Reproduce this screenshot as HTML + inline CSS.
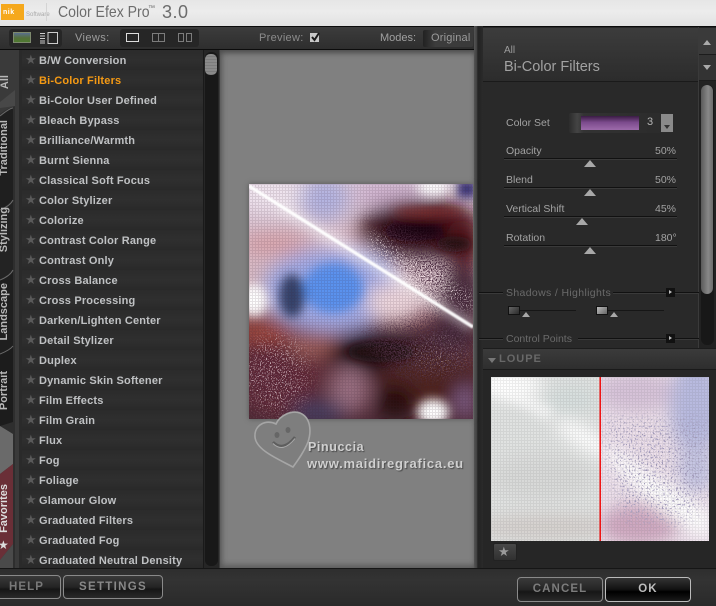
<!DOCTYPE html>
<html><head><meta charset="utf-8"><style>
*{box-sizing:border-box}
html,body{margin:0;padding:0;background:#2b2b2b}
#p{position:relative;width:716px;height:606px;overflow:hidden;background:#2b2b2b;font-family:"Liberation Sans",sans-serif}
.a{position:absolute}
.t{position:absolute;white-space:nowrap}
.row{position:absolute;left:22px;width:181px;height:20px;background:linear-gradient(#2b2b2b,#2f2f2f 50%,#292929)}
.row span{position:absolute;left:17px;top:4px;font-size:11px;font-weight:bold;color:#bfc1c3;letter-spacing:.18px;white-space:nowrap;line-height:14px}
.row i{position:absolute;left:3px;top:3px;font-style:normal;font-size:13px;line-height:14px;color:#5a5a5a}
.vt{position:absolute;left:-2px;font-size:11px;font-weight:bold;color:#b8b8b8;writing-mode:vertical-rl;transform:rotate(180deg);white-space:nowrap;line-height:12px}
.lab{position:absolute;font-size:10.5px;color:#a2a2a2;white-space:nowrap;line-height:12px}
.line{position:absolute;height:1px;background:#111;box-shadow:0 1px 0 #3a3a3a}
.thumb{position:absolute;width:0;height:0;border-left:6px solid transparent;border-right:6px solid transparent;border-bottom:7px solid #a8a8a8}
.btn{position:absolute;border:1px solid #8a8a8a;border-radius:4px;text-align:center;font-size:11.5px;font-weight:bold;letter-spacing:1.1px;background:linear-gradient(#3a3a3a,#242424 50%,#161616 60%,#2a2a2a)}
</style></head><body><div id="p">
<div class="a" style="left:0;top:0;width:716px;height:26px;background:linear-gradient(#e6e6e6,#ececec 45%,#e2e2e2)"></div>
<div class="a" style="left:1px;top:4px;width:23px;height:16px;background:#f5a81c"></div>
<div class="t" style="left:3px;top:9px;font-size:7px;font-weight:bold;color:#fff;letter-spacing:.5px">nik</div>
<div class="t" style="left:26px;top:12px;font-size:6px;color:#aaa">Software</div>
<div class="a" style="left:46px;top:3px;width:1px;height:18px;background:#d4d4d4"></div>
<div class="t" style="left:58px;top:3px;font-size:16px;color:#6c6c6c;line-height:19px;transform:scaleX(.88);transform-origin:0 0">Color Efex Pro</div>
<div class="t" style="left:148px;top:4px;font-size:7px;color:#6c6c6c;line-height:9px">™</div>
<div class="t" style="left:162px;top:2px;font-size:18px;color:#6c6c6c;line-height:21px;letter-spacing:.5px">3.0</div>

<div class="a" style="left:0;top:26px;width:716px;height:24px;background:linear-gradient(#3c3c3c,#2e2e2e);border-top:1px solid #0c0c0c;border-bottom:1px solid #0c0c0c"></div>
<div class="a" style="left:9px;top:29px;width:53px;height:18px;background:#262626;border-radius:3px"></div>
<div class="a" style="left:13px;top:32px;width:18px;height:11px;background:linear-gradient(#5a6f8e 0,#55703a 55%,#4e7a30);border:1px solid #7d8a6e"></div>
<svg class="a" style="left:39px;top:32px" width="20" height="12"><path d="M1 1.5h5M1 4h5M1 6.5h5M1 9h5M1 11h5" stroke="#ccc" stroke-width="1"/><rect x="9" y=".5" width="9.5" height="11" fill="none" stroke="#ccc"/></svg>
<div class="t" style="left:75px;top:31px;font-size:11px;color:#9c9c9c;letter-spacing:.4px;line-height:14px">Views:</div>
<div class="a" style="left:120px;top:29px;width:79px;height:18px;background:#262626;border-radius:3px"></div>
<div class="a" style="left:126px;top:33px;width:13px;height:9px;border:1px solid #ddd"></div>
<svg class="a" style="left:150px;top:32px" width="46" height="11"><path d="M2.5 1.5h12v8h-12zM8.5 1.5v8M28.5 1.5h5v8h-5zM36.5 1.5h5v8h-5z" fill="none" stroke="#7c7c7c"/></svg>
<div class="t" style="left:259px;top:31px;font-size:11px;color:#8c8c8c;letter-spacing:.3px;line-height:14px">Preview:</div>
<div class="a" style="left:310px;top:33px;width:9px;height:9px;background:#c8c8c8"></div>
<svg class="a" style="left:309px;top:31px" width="12" height="12"><path d="M3 6l2.5 3L10 2" stroke="#1a1a1a" stroke-width="2" fill="none"/></svg>
<div class="t" style="left:380px;top:31px;font-size:11px;color:#a0a0a0;line-height:14px">Modes:</div>
<div class="a" style="left:423px;top:30px;width:50px;height:17px;background:linear-gradient(90deg,#222,#3c3c3c 25%,#3a3a3a);border-radius:2px;overflow:hidden"><span class="t" style="left:8px;top:1px;font-size:11px;color:#9a9a9a;line-height:14px;letter-spacing:.2px">Original Image</span></div>

<!-- left tabs -->
<div class="a" style="left:0;top:50px;width:22px;height:518px;background:#2e2e2e"></div>
<svg class="a" style="left:0;top:50px" width="20" height="518">
<path d="M0 0H15V56Q8 58 0 64Z" fill="#3a3a3a"/>
<path d="M0 52L15 40V56L0 58Z" fill="#484848"/>
<path d="M0 66Q10 58 13 58V152L0 160Z" fill="#1f1f1f"/>
<path d="M0 160Q10 152 13 150V222L0 230Z" fill="#232323"/>
<path d="M0 230Q10 226 13 220V298L0 304Z" fill="#1f1f1f"/>
<path d="M0 304Q10 300 13 296V372L0 376Z" fill="#1c1c1c"/>
<path d="M0 376L13 384V414L0 424Z" fill="#6a6a6a"/>
<path d="M0 424L13 414V494L0 510Z" fill="#6a2f37"/>
<path d="M0 510L13 494V518H0Z" fill="#4a4a4a"/>
<path d="M0 66Q10 58 13 58M0 160Q10 156 13 150M0 230Q10 226 13 220M0 304Q10 300 13 296" fill="none" stroke="#6a6a6a"/>
</svg>
<div class="vt" style="top:75px;left:-1px">All</div>
<div class="vt" style="top:120px">Traditional</div>
<div class="vt" style="top:207px">Stylizing</div>
<div class="vt" style="top:283px">Landscape</div>
<div class="vt" style="top:371px">Portrait</div>
<div class="vt" style="top:484px;color:#ddd">Favorites</div>
<div class="t" style="left:-2px;top:538px;font-size:12px;color:#ddd;line-height:14px">★</div>
<div class="a" style="left:15px;top:50px;width:4px;height:518px;background:#3a3a3a"></div>

<!-- list -->
<div class="a" style="left:19px;top:50px;width:184px;height:518px;background:#2a2a2a"></div>
<div class="row" style="top:50px"><i>★</i><span>B/W Conversion</span></div>
<div class="row" style="top:70px"><i>★</i><span style="color:#f59a14">Bi-Color Filters</span></div>
<div class="row" style="top:90px"><i>★</i><span>Bi-Color User Defined</span></div>
<div class="row" style="top:110px"><i>★</i><span>Bleach Bypass</span></div>
<div class="row" style="top:130px"><i>★</i><span>Brilliance/Warmth</span></div>
<div class="row" style="top:150px"><i>★</i><span>Burnt Sienna</span></div>
<div class="row" style="top:170px"><i>★</i><span>Classical Soft Focus</span></div>
<div class="row" style="top:190px"><i>★</i><span>Color Stylizer</span></div>
<div class="row" style="top:210px"><i>★</i><span>Colorize</span></div>
<div class="row" style="top:230px"><i>★</i><span>Contrast Color Range</span></div>
<div class="row" style="top:250px"><i>★</i><span>Contrast Only</span></div>
<div class="row" style="top:270px"><i>★</i><span>Cross Balance</span></div>
<div class="row" style="top:290px"><i>★</i><span>Cross Processing</span></div>
<div class="row" style="top:310px"><i>★</i><span>Darken/Lighten Center</span></div>
<div class="row" style="top:330px"><i>★</i><span>Detail Stylizer</span></div>
<div class="row" style="top:350px"><i>★</i><span>Duplex</span></div>
<div class="row" style="top:370px"><i>★</i><span>Dynamic Skin Softener</span></div>
<div class="row" style="top:390px"><i>★</i><span>Film Effects</span></div>
<div class="row" style="top:410px"><i>★</i><span>Film Grain</span></div>
<div class="row" style="top:430px"><i>★</i><span>Flux</span></div>
<div class="row" style="top:450px"><i>★</i><span>Fog</span></div>
<div class="row" style="top:470px"><i>★</i><span>Foliage</span></div>
<div class="row" style="top:490px"><i>★</i><span>Glamour Glow</span></div>
<div class="row" style="top:510px"><i>★</i><span>Graduated Filters</span></div>
<div class="row" style="top:530px"><i>★</i><span>Graduated Fog</span></div>
<div class="row" style="top:550px;height:18px"><i>★</i><span>Graduated Neutral Density</span></div>

<!-- list scrollbar -->
<div class="a" style="left:203px;top:50px;width:17px;height:518px;background:#262626;border-left:1px solid #1a1a1a;border-right:1px solid #3c3c3c"></div>
<div class="a" style="left:205px;top:52px;width:13px;height:514px;background:#181818;border-radius:6px"></div>
<div class="a" style="left:205px;top:54px;width:12px;height:21px;border-radius:5px;background:repeating-linear-gradient(#8a8a8a 0,#8a8a8a 2px,#6e6e6e 3px)"></div>

<!-- preview -->
<div class="a" style="left:220px;top:50px;width:254px;height:518px;background:#808080;box-shadow:inset 0 5px 6px -2px #4c4c4c,inset 5px 0 6px -3px #5c5c5c,inset 0 -6px 6px -3px #5c5c5c"></div>
<div class="a" style="left:474px;top:26px;width:9px;height:542px;background:linear-gradient(90deg,#555,#3e3e3e 35%,#222 40%,#2a2a2a)"></div>

<svg class="a" style="left:249px;top:184px;box-shadow:0 0 5px #555" width="224" height="235" viewBox="0 0 224 235">
<defs>
<filter id="b" x="-40%" y="-40%" width="180%" height="180%"><feGaussianBlur stdDeviation="9"/></filter>
<filter id="b2" x="-40%" y="-40%" width="180%" height="180%"><feGaussianBlur stdDeviation="5"/></filter>
<filter id="b3"><feGaussianBlur stdDeviation=".8"/></filter>
<filter id="nk" x="0" y="0" width="100%" height="100%"><feTurbulence type="fractalNoise" baseFrequency=".8" numOctaves="2" seed="4"/><feColorMatrix values="0 0 0 0 .08 0 0 0 0 .03 0 0 0 0 .06 9 0 0 0 -4.2"/></filter>
<filter id="nw" x="0" y="0" width="100%" height="100%"><feTurbulence type="fractalNoise" baseFrequency=".8" numOctaves="2" seed="9"/><feColorMatrix values="0 0 0 0 1 0 0 0 0 .86 0 0 0 0 .9 9 0 0 0 -5.2"/></filter>
<pattern id="g" width="3" height="3" patternUnits="userSpaceOnUse"><path d="M0 .5H3M.5 0V3" stroke="#3a2030" stroke-opacity=".12" stroke-width="1"/></pattern>
<linearGradient id="wm" x1="0" y1="0" x2="0" y2="1"><stop offset="0" stop-color="#dccbdc"/><stop offset=".5" stop-color="#d6b4bc"/><stop offset=".62" stop-color="#703a40"/><stop offset="1" stop-color="#4e2a36"/></linearGradient>
<mask id="mk"><rect width="224" height="235" fill="#000"/><path d="M110 30L224 75V190L150 195L110 150L190 130Z" fill="#fff" filter="url(#b)"/><ellipse cx="20" cy="200" rx="30" ry="25" fill="#555" filter="url(#b)"/></mask>
<mask id="mw"><rect width="224" height="235" fill="#000"/><path d="M120 45L224 110V130L120 70Z" fill="#fff" filter="url(#b2)"/><ellipse cx="28" cy="190" rx="32" ry="40" fill="#ccc" filter="url(#b)"/><ellipse cx="190" cy="170" rx="30" ry="18" fill="#777" filter="url(#b)"/></mask>
</defs>
<rect width="224" height="235" fill="url(#wm)"/>
<g filter="url(#b)">
<ellipse cx="25" cy="10" rx="40" ry="20" fill="#efe4ee"/>
<ellipse cx="75" cy="15" rx="24" ry="22" fill="#b4b4e0"/>
<ellipse cx="140" cy="10" rx="36" ry="14" fill="#d0b4d0"/>
<ellipse cx="25" cy="60" rx="36" ry="12" fill="#d8a4ac"/>
<ellipse cx="100" cy="60" rx="30" ry="14" fill="#e4c8d4"/>
<ellipse cx="125" cy="48" rx="22" ry="12" fill="#9a5a62"/>
<ellipse cx="172" cy="46" rx="62" ry="30" fill="#3a0c14"/>
<ellipse cx="214" cy="62" rx="18" ry="28" fill="#5a161c"/>
<ellipse cx="165" cy="95" rx="36" ry="14" fill="#eed8de"/>
<ellipse cx="84" cy="106" rx="70" ry="42" fill="#a0aae6"/>
<ellipse cx="145" cy="118" rx="28" ry="20" fill="#ecd6dc"/>
<ellipse cx="212" cy="112" rx="22" ry="28" fill="#3e2430"/>
<ellipse cx="30" cy="188" rx="44" ry="44" fill="#5e2634"/>
<ellipse cx="14" cy="148" rx="32" ry="8" fill="#a84c3c"/>
<ellipse cx="70" cy="160" rx="30" ry="14" fill="#9a5c58"/>
<ellipse cx="135" cy="170" rx="56" ry="24" fill="#260c12"/>
<ellipse cx="180" cy="195" rx="50" ry="28" fill="#4e201e"/>
<ellipse cx="205" cy="150" rx="24" ry="18" fill="#3c2430"/>
<ellipse cx="100" cy="206" rx="20" ry="24" fill="#986e80"/>
<ellipse cx="70" cy="228" rx="28" ry="12" fill="#443c60"/>
<ellipse cx="146" cy="218" rx="20" ry="18" fill="#26100e"/>
<ellipse cx="216" cy="218" rx="10" ry="18" fill="#80608a"/>
</g>
<g filter="url(#b2)">
<ellipse cx="84" cy="104" rx="30" ry="25" fill="#5a92ee"/>
<ellipse cx="43" cy="112" rx="13" ry="22" fill="#34426a"/>
<ellipse cx="5" cy="116" rx="13" ry="16" fill="#fff"/>
<ellipse cx="184" cy="228" rx="16" ry="13" fill="#fff"/>
<ellipse cx="184" cy="3" rx="16" ry="8" fill="#fff"/>
<rect x="208" y="-4" width="20" height="18" fill="#352e72"/>
<ellipse cx="165" cy="47" rx="30" ry="10" fill="#14060a"/>
<ellipse cx="205" cy="60" rx="18" ry="8" fill="#20080c"/>
<ellipse cx="180" cy="28" rx="36" ry="5" fill="#7c2a2a"/>
<ellipse cx="132" cy="168" rx="34" ry="10" fill="#1a0a10"/>
</g>
<rect width="224" height="235" filter="url(#nk)" mask="url(#mk)"/>
<rect width="224" height="235" filter="url(#nw)" mask="url(#mw)"/>
<rect width="224" height="235" fill="url(#g)"/>
<path d="M30 22L224 143" stroke="#fff" stroke-width="11" stroke-opacity=".45" filter="url(#b2)"/>
<path d="M0 2L224 143" stroke="#fff" stroke-width="3.4" stroke-opacity=".95" filter="url(#b3)"/>
</svg>

<!-- watermark -->
<svg class="a" style="left:254px;top:410px" width="60" height="62" viewBox="0 0 60 62">
<path d="M39 57C24 49 2 40 1 27 0 15 12 9 22 14 26 5 38 0 46 3 56 7 58 20 54 32 50 42 44 50 39 57Z" fill="#7e7e7e" stroke="#a6a6a6" stroke-width="1.6"/>
<ellipse cx="23" cy="25" rx="2.5" ry="3" fill="#666"/><ellipse cx="34" cy="20" rx="2.5" ry="3" fill="#666"/>
<path d="M19 32Q29 42 41 27" fill="none" stroke="#5e5e5e" stroke-width="2.6"/>
<path d="M19 33.5Q29 43.5 41 28.5" fill="none" stroke="#aaa" stroke-width="1"/>
</svg>
<div class="t" style="left:308px;top:440px;font-size:12.5px;font-weight:bold;color:#d0d0d0;line-height:14px;text-shadow:1px 1px 1px #4a4a4a;letter-spacing:.6px">Pinuccia</div>
<div class="t" style="left:307px;top:457px;font-size:13px;font-weight:bold;color:#d0d0d0;line-height:14px;text-shadow:1px 1px 1px #4a4a4a;letter-spacing:.75px">www.maidiregrafica.eu</div>

<!-- right panel -->
<div class="a" style="left:483px;top:27px;width:233px;height:541px;background:#292929"></div>
<div class="a" style="left:483px;top:28px;width:215px;height:54px;background:linear-gradient(#3c3c3c,#2c2c2c);border-bottom:1px solid #1a1a1a"></div>
<div class="t" style="left:504px;top:45px;font-size:10px;color:#9c9c9c;line-height:12px">All</div>
<div class="t" style="left:504px;top:58px;font-size:14.5px;color:#a2a2a2;line-height:18px">Bi-Color Filters</div>

<div class="a" style="left:698px;top:27px;width:18px;height:321px;background:#222;border-left:1px solid #3a3a3a"></div>
<div class="a" style="left:699px;top:28px;width:17px;height:27px;background:#3a3a3a;border-bottom:1px solid #1c1c1c"></div>
<div class="a" style="left:699px;top:55px;width:17px;height:26px;background:#333;border-bottom:1px solid #1c1c1c"></div>
<div class="a" style="left:703px;top:40px;width:0;height:0;border-left:4px solid transparent;border-right:4px solid transparent;border-bottom:5px solid #aaa"></div>
<div class="a" style="left:703px;top:65px;width:0;height:0;border-left:4px solid transparent;border-right:4px solid transparent;border-top:5px solid #aaa"></div>
<div class="a" style="left:701px;top:85px;width:13px;height:260px;background:#181818;border-radius:6px"></div>
<div class="a" style="left:701px;top:85px;width:12px;height:209px;background:linear-gradient(90deg,#5a5a5a,#888 60%,#6c6c6c);border-radius:6px"></div>

<div class="lab" style="left:506px;top:117px">Color Set</div>
<div class="a" style="left:569px;top:113px;width:104px;height:20px;background:linear-gradient(90deg,#2c2c2c,#444 8%,#333 14%,#2a2a2a);border-radius:2px"></div>
<div class="a" style="left:581px;top:116px;width:58px;height:14px;background:linear-gradient(#3a1c44,#7b4a8c 45%,#9a68a8 95%)"></div>
<div class="t" style="left:647px;top:116px;font-size:11px;color:#b4b4b4;line-height:13px">3</div>
<div class="a" style="left:661px;top:114px;width:12px;height:18px;background:#8a8a8a"></div>
<div class="a" style="left:664px;top:125px;width:0;height:0;border-left:3.5px solid transparent;border-right:3.5px solid transparent;border-top:4px solid #333"></div>

<div class="lab" style="left:506px;top:145px">Opacity</div><div class="lab" style="left:655px;top:145px">50%</div>
<div class="line" style="left:504px;top:158px;width:173px"></div><div class="thumb" style="left:584px;top:160px"></div>
<div class="lab" style="left:506px;top:174px">Blend</div><div class="lab" style="left:655px;top:174px">50%</div>
<div class="line" style="left:504px;top:187px;width:173px"></div><div class="thumb" style="left:584px;top:189px"></div>
<div class="lab" style="left:506px;top:203px">Vertical Shift</div><div class="lab" style="left:655px;top:203px">45%</div>
<div class="line" style="left:504px;top:216px;width:173px"></div><div class="thumb" style="left:576px;top:218px"></div>
<div class="lab" style="left:506px;top:232px">Rotation</div><div class="lab" style="left:655px;top:232px">180°</div>
<div class="line" style="left:504px;top:245px;width:173px"></div><div class="thumb" style="left:584px;top:247px"></div>

<div class="line" style="left:479px;top:292px;width:220px"></div>
<div class="a" style="left:503px;top:286px;width:110px;height:14px;background:#292929"></div>
<div class="lab" style="left:506px;top:287px;color:#6a6a6a;letter-spacing:.35px">Shadows / Highlights</div>
<div class="a" style="left:666px;top:288px;width:9px;height:9px;background:#111"></div>
<div class="a" style="left:669px;top:290px;width:0;height:0;border-top:2.5px solid transparent;border-bottom:2.5px solid transparent;border-left:3.5px solid #bbb"></div>
<div class="a" style="left:508px;top:306px;width:12px;height:9px;background:linear-gradient(135deg,#666,#2a2a2a);border:1px solid #111"></div>
<div class="line" style="left:520px;top:310px;width:56px;background:#161616;box-shadow:none"></div>
<div class="thumb" style="left:522px;top:312px;border-left-width:4px;border-right-width:4px;border-bottom-width:5px"></div>
<div class="a" style="left:596px;top:306px;width:12px;height:9px;background:linear-gradient(135deg,#bbb,#666);border:1px solid #111"></div>
<div class="line" style="left:608px;top:310px;width:56px;background:#161616;box-shadow:none"></div>
<div class="thumb" style="left:610px;top:312px;border-left-width:4px;border-right-width:4px;border-bottom-width:5px"></div>

<div class="line" style="left:479px;top:338px;width:220px"></div>
<div class="a" style="left:503px;top:332px;width:75px;height:14px;background:#292929"></div>
<div class="lab" style="left:506px;top:333px;color:#6a6a6a">Control Points</div>
<div class="a" style="left:666px;top:334px;width:9px;height:9px;background:#111"></div>
<div class="a" style="left:669px;top:336px;width:0;height:0;border-top:2.5px solid transparent;border-bottom:2.5px solid transparent;border-left:3.5px solid #bbb"></div>

<div class="a" style="left:483px;top:348px;width:233px;height:22px;background:linear-gradient(#3b3b3b,#2e2e2e);border-top:1px solid #1c1c1c;border-bottom:1px solid #1a1a1a"></div>
<div class="a" style="left:488px;top:358px;width:0;height:0;border-left:4px solid transparent;border-right:4px solid transparent;border-top:5px solid #777"></div>
<div class="t" style="left:499px;top:352px;font-size:11px;font-weight:bold;color:#686868;letter-spacing:1px;line-height:14px">LOUPE</div>
<div class="a" style="left:483px;top:370px;width:233px;height:198px;background:#262626"></div>

<svg class="a" style="left:491px;top:377px" width="218" height="164" viewBox="0 0 218 164">
<defs>
<clipPath id="cl"><rect width="109" height="164"/></clipPath>
<clipPath id="cr"><rect x="109" width="109" height="164"/></clipPath>
<filter id="lb" x="-40%" y="-40%" width="180%" height="180%"><feGaussianBlur stdDeviation="8"/></filter>
<filter id="ln" x="0" y="0" width="100%" height="100%"><feTurbulence type="fractalNoise" baseFrequency=".55" numOctaves="2" seed="3"/><feColorMatrix values="0 0 0 0 .38 0 0 0 0 .34 0 0 0 0 .52 9 0 0 0 -5.2"/></filter>
<mask id="lm"><rect x="109" width="109" height="164" fill="#000"/><path d="M112 40L218 40V120L190 150L130 145L118 90Z" fill="#fff" filter="url(#lb)"/></mask>
<pattern id="lg" width="3" height="3" patternUnits="userSpaceOnUse"><path d="M0 .5H3M.5 0V3" stroke="#555" stroke-opacity=".1"/></pattern>
</defs>
<g clip-path="url(#cl)">
<rect width="109" height="164" fill="#e0e2e1"/>
<g filter="url(#lb)"><ellipse cx="18" cy="8" rx="34" ry="14" fill="#fff"/><ellipse cx="95" cy="62" rx="34" ry="10" fill="#fff" transform="rotate(30 95 62)"/><ellipse cx="55" cy="150" rx="70" ry="12" fill="#d4cfcc"/><ellipse cx="80" cy="22" rx="28" ry="14" fill="#d6dedd"/><ellipse cx="50" cy="100" rx="50" ry="22" fill="#d8d9d8"/></g>
<path d="M0 5L60 38" stroke="#fff" stroke-width="14" stroke-opacity=".7" filter="url(#b2)"/>
<rect width="109" height="164" fill="url(#lg)"/>
</g>
<g clip-path="url(#cr)">
<rect x="109" width="109" height="164" fill="#ecdfea"/>
<g filter="url(#lb)"><ellipse cx="145" cy="15" rx="40" ry="20" fill="#d6c2d8"/><ellipse cx="205" cy="30" rx="26" ry="50" fill="#b8badf"/><ellipse cx="148" cy="148" rx="40" ry="20" fill="#cfa8c0"/><path d="M112 65L218 135V164L170 135L118 85Z" fill="#fff"/><ellipse cx="205" cy="90" rx="18" ry="26" fill="#c4c4e2"/></g>
<rect width="218" height="164" filter="url(#ln)" mask="url(#lm)"/>
<rect x="109" width="109" height="164" fill="url(#lg)"/>
</g>
<rect x="108.5" width="1.4" height="164" fill="#f00000"/>
</svg>
<div class="a" style="left:493px;top:543px;width:24px;height:18px;background:linear-gradient(#484848,#303030);border:1px solid #222;border-radius:2px"></div>
<div class="t" style="left:498px;top:545px;font-size:13px;color:#9a9a9a;line-height:14px">★</div>

<!-- bottom bar -->
<div class="a" style="left:0;top:568px;width:716px;height:38px;background:linear-gradient(#2e2e2e,#333 30%,#2a2a2a);border-top:1px solid #161616"></div>
<div class="btn" style="left:-6px;top:575px;width:67px;height:24px;line-height:23px;color:#787878;text-indent:-2px">HELP</div>
<div class="btn" style="left:63px;top:575px;width:100px;height:24px;line-height:22px;color:#888;letter-spacing:1.3px">SETTINGS</div>
<div class="btn" style="left:517px;top:577px;width:86px;height:25px;line-height:23px;color:#7c7c7c">CANCEL</div>
<div class="btn" style="left:605px;top:577px;width:86px;height:25px;line-height:23px;color:#bdbdbd;border-color:#bbb;background:linear-gradient(#333,#111 50%,#000 60%,#1a1a1a)">OK</div>
</div></body></html>
